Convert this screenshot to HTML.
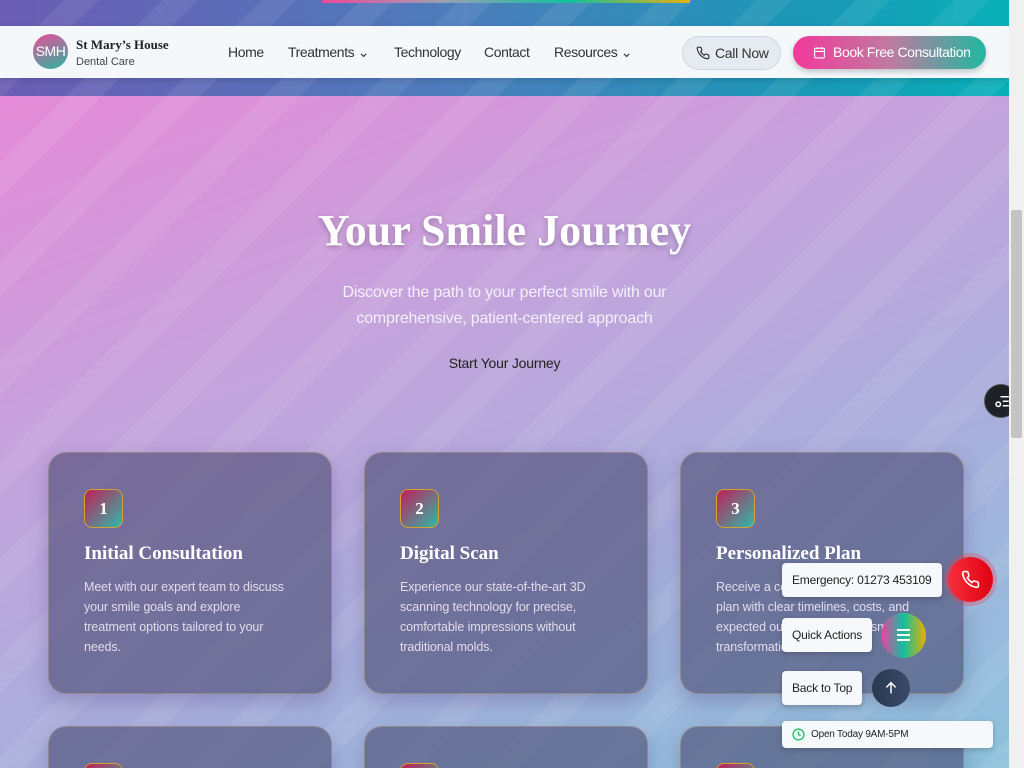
<!DOCTYPE html>
<html><head><meta charset="utf-8"><style>
*{box-sizing:border-box;margin:0;padding:0}
html,body{width:1024px;height:768px;overflow:hidden}
body{font-family:"Liberation Sans",sans-serif;position:relative;background:#b8a6d8}
.bg{position:absolute;left:0;top:96px;width:1009px;height:672px;background:linear-gradient(160deg,#e48ad6 0%,#c4a3dc 35%,#a9aedc 65%,#8cc2dc 100%)}
.top{position:absolute;left:0;top:0;width:1009px;height:96px;background:linear-gradient(90deg,#6c5cb4 0%,#4c7cbb 45%,#1a98b6 80%,#08b0b8 100%)}
.stripes{position:absolute;left:0;top:0;width:1009px;height:768px;background:repeating-linear-gradient(135deg,rgba(255,255,255,0) 0 45px,rgba(255,255,255,.07) 45px 70px)}
.rbar{position:absolute;left:322px;top:0;width:368px;height:3px;background:linear-gradient(90deg,#ee4a9a,#9aa0b0,#10c0a0,#e6b010)}
.hdr{position:absolute;left:0;top:26px;width:1009px;height:52px;background:#f4f8fb;box-shadow:0 2px 6px rgba(0,0,0,.15)}
.logo{position:absolute;left:33px;top:8px;width:35px;height:35px;border-radius:50%;background:linear-gradient(160deg,#ea4f9a,#2ab5a0);color:#fff;font-size:14px;line-height:35px;text-align:center;letter-spacing:-.5px}
.bn{position:absolute;left:76px;top:11px;font-family:"Liberation Serif",serif;font-weight:bold;font-size:13px;color:#222}
.bs{position:absolute;left:76px;top:30px;font-size:11px;color:#444}
.nav{position:absolute;top:18px;font-size:14px;color:#333;letter-spacing:-.4px}
.call{position:absolute;left:682px;top:10px;width:99px;height:34px;border-radius:17px;background:#e6ebf2;border:1px solid #cfd6e0;font-size:14px;color:#333;line-height:32px;padding-left:32px;letter-spacing:-.3px}
.book{position:absolute;left:793px;top:10px;width:193px;height:33px;border-radius:17px;background:linear-gradient(90deg,#f2389a,#c07aa0,#20b8a0);color:#fff;font-size:14px;line-height:33px;padding-left:40px;box-shadow:0 3px 6px rgba(0,0,0,.2);letter-spacing:-.4px}
h1{position:absolute;left:0;width:1009px;top:205px;text-align:center;font-family:"Liberation Serif",serif;font-weight:bold;font-size:44px;color:#fff;text-shadow:0 2px 6px rgba(0,0,0,.25)}
.sub{position:absolute;left:0;width:1009px;top:280px;text-align:center;color:#f4f0fa;font-size:16px;line-height:26px;letter-spacing:-.2px}
.sj{position:absolute;left:0;width:1009px;top:355px;text-align:center;font-size:14px;color:#222;letter-spacing:-.2px}
.card{position:absolute;width:284px;height:242px;border-radius:18px;background:rgba(70,70,110,.6);border:1px solid rgba(200,170,120,.4);box-shadow:0 8px 20px rgba(60,40,100,.25)}
.num{position:absolute;left:35px;top:36px;width:39px;height:39px;border-radius:8px;border:1px solid #d8a030;background:linear-gradient(135deg,#c0205a,#30b8a8);color:#fff;font-family:"Liberation Serif",serif;font-weight:bold;font-size:17px;text-align:center;line-height:38px}
.ct{position:absolute;left:35px;top:90px;font-family:"Liberation Serif",serif;font-weight:bold;font-size:19px;color:#fff}
.cd{position:absolute;left:35px;top:124px;width:206px;font-size:12.5px;line-height:20px;color:#e2dcec;letter-spacing:-.1px}
.pill{position:absolute;background:#f6f8fb;border-radius:4px;font-size:12px;color:#222;box-shadow:0 2px 6px rgba(0,0,0,.2);padding:0 10px;letter-spacing:-.2px}
.circ{position:absolute;border-radius:50%}
.sb{position:absolute;left:1009px;top:0;width:15px;height:768px;background:#f0f0f0}
</style></head><body>
<div class="top"></div><div class="bg"></div><div class="stripes"></div>
<div class="rbar"></div>
<div class="hdr">
<div class="logo">SMH</div>
<div class="bn">St Mary’s House</div><div class="bs">Dental Care</div>
<div class="nav" style="left:228px">Home</div>
<div class="nav" style="left:288px">Treatments ⌄</div>
<div class="nav" style="left:394px">Technology</div>
<div class="nav" style="left:484px">Contact</div>
<div class="nav" style="left:554px">Resources ⌄</div>
<div class="call"><svg style="position:absolute;left:13px;top:9px" width="14" height="14" viewBox="0 0 24 24" fill="none" stroke="#333" stroke-width="2"><path d="M22 16.9v3a2 2 0 0 1-2.2 2 19.8 19.8 0 0 1-8.6-3.1 19.5 19.5 0 0 1-6-6A19.8 19.8 0 0 1 2.1 4.2 2 2 0 0 1 4.1 2h3a2 2 0 0 1 2 1.7c.1.9.4 1.8.7 2.7a2 2 0 0 1-.5 2.1L8 9.8a16 16 0 0 0 6 6l1.3-1.3a2 2 0 0 1 2.1-.4c.9.3 1.8.6 2.7.7a2 2 0 0 1 1.7 2z"/></svg>Call Now</div>
<div class="book"><svg style="position:absolute;left:20px;top:10px" width="13" height="13" viewBox="0 0 24 24" fill="none" stroke="#fff" stroke-width="2"><rect x="3" y="4" width="18" height="18" rx="2"/><path d="M16 2v4M8 2v4M3 10h18"/></svg>Book Free Consultation</div>
</div>
<h1>Your Smile Journey</h1>
<div class="sub">Discover the path to your perfect smile with our<br>comprehensive, patient-centered approach</div>
<div class="sj">Start Your Journey</div>
<div class="card" style="left:48px;top:452px"><div class="num">1</div><div class="ct">Initial Consultation</div><div class="cd">Meet with our expert team to discuss your smile goals and explore treatment options tailored to your needs.</div></div>
<div class="card" style="left:364px;top:452px"><div class="num">2</div><div class="ct">Digital Scan</div><div class="cd">Experience our state-of-the-art 3D scanning technology for precise, comfortable impressions without traditional molds.</div></div>
<div class="card" style="left:680px;top:452px"><div class="num">3</div><div class="ct">Personalized Plan</div><div class="cd">Receive a comprehensive treatment plan with clear timelines, costs, and expected outcomes for your smile transformation.</div></div>
<div class="card" style="left:48px;top:726px"><div class="num"></div></div>
<div class="card" style="left:364px;top:726px"><div class="num"></div></div>
<div class="card" style="left:680px;top:726px"><div class="num"></div></div>
<div class="circ" style="left:984px;top:384px;width:34px;height:34px;background:#1e2228;border:1px solid #555"><svg style="position:absolute;left:8px;top:8px" width="18" height="18" viewBox="0 0 24 24" fill="none" stroke="#fff" stroke-width="2"><path d="M10 5h11M13 11h8M13 17h8"/><circle cx="7" cy="15" r="3"/></svg></div>
<div class="pill" style="left:782px;top:563px;height:34px;line-height:34px">Emergency: 01273 453109</div>
<div class="circ" style="left:948px;top:557px;width:45px;height:45px;background:linear-gradient(90deg,#f8303c,#e00010);box-shadow:0 0 0 4px rgba(240,60,80,.3)"><svg style="position:absolute;left:13px;top:13px" width="19" height="19" viewBox="0 0 24 24" fill="none" stroke="#fff" stroke-width="2"><path d="M22 16.9v3a2 2 0 0 1-2.2 2 19.8 19.8 0 0 1-8.6-3.1 19.5 19.5 0 0 1-6-6A19.8 19.8 0 0 1 2.1 4.2 2 2 0 0 1 4.1 2h3a2 2 0 0 1 2 1.7c.1.9.4 1.8.7 2.7a2 2 0 0 1-.5 2.1L8 9.8a16 16 0 0 0 6 6l1.3-1.3a2 2 0 0 1 2.1-.4c.9.3 1.8.6 2.7.7a2 2 0 0 1 1.7 2z"/></svg></div>
<div class="pill" style="left:782px;top:618px;height:34px;line-height:34px">Quick Actions</div>
<div class="circ" style="left:881px;top:613px;width:45px;height:45px;background:linear-gradient(90deg,#f040a0,#10c0a0,#e8b000)"><div style="position:absolute;left:16px;top:16px;width:13px;height:12px;border-top:2px solid #fff;border-bottom:2px solid #fff"><div style="margin-top:3px;height:2px;background:#fff"></div></div></div>
<div class="pill" style="left:782px;top:671px;height:34px;line-height:34px">Back to Top</div>
<div class="circ" style="left:872px;top:669px;width:38px;height:38px;background:linear-gradient(90deg,#2a3850,#3a4a68)"><svg style="position:absolute;left:11px;top:11px" width="16" height="16" viewBox="0 0 24 24" fill="none" stroke="#fff" stroke-width="2.2"><path d="M12 20V4M5 11l7-7 7 7"/></svg></div>
<div class="pill" style="left:782px;top:721px;width:211px;height:27px;line-height:27px;font-size:10px;padding-left:29px"><svg style="position:absolute;left:10px;top:7px" width="13" height="13" viewBox="0 0 24 24" fill="none" stroke="#20c060" stroke-width="2.5"><circle cx="12" cy="12" r="10"/><path d="M12 6v6l4 2"/></svg>Open Today 9AM-5PM</div>
<div class="sb"><div style="position:absolute;left:2px;top:210px;width:11px;height:228px;background:#c4c4c4;border-radius:2px"></div></div>
</body></html>
